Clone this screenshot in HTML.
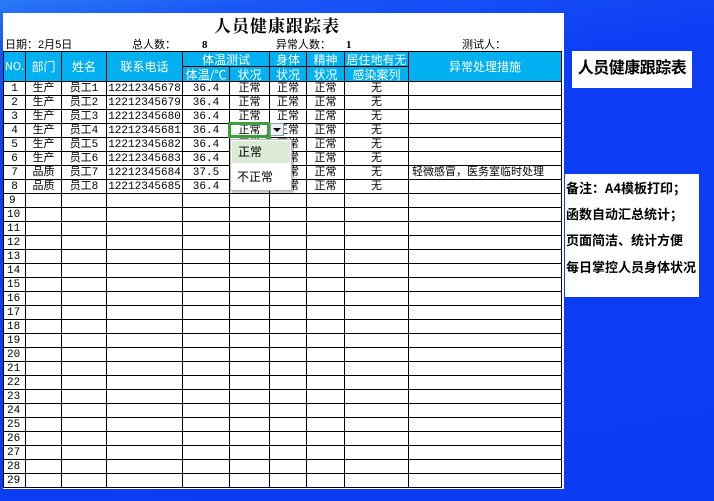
<!DOCTYPE html>
<html><head><meta charset="utf-8"><style>
*{margin:0;padding:0;box-sizing:border-box}
body{width:714px;height:501px;overflow:hidden;position:relative;font-family:"Liberation Sans","Noto Sans CJK SC",sans-serif;background:linear-gradient(170deg,#2a7af5 0%,#1a55f5 8%,#0d3df5 25%,#0c3cf2 100%)}
.sheet{position:absolute;left:3px;top:13px;width:561px;height:476px;background:#fff}
.abs{position:absolute;white-space:nowrap;color:#000;line-height:14px}
table{position:absolute;left:3px;top:51px;border-collapse:collapse;table-layout:fixed;font-size:11px;font-family:"Liberation Mono","Noto Sans CJK SC",monospace}
td{border:1px solid #000;height:14px;line-height:12px;text-align:center;overflow:hidden;white-space:nowrap;padding:0}
thead td{background:#00b0f0;color:#fff;font-family:"Noto Sans CJK SC",sans-serif;font-size:12px;line-height:13px;height:15px}
td.l{text-align:left;padding-left:3px}
.box{position:absolute;background:#fff;font-family:"Noto Sans CJK SC",sans-serif;font-weight:bold;color:#000}
</style></head><body>
<div class="sheet"></div>
<div class="abs" style="left:214px;top:15px;font-size:17px;line-height:20px;font-weight:bold;font-family:'Noto Serif CJK SC',serif;letter-spacing:1px">人员健康跟踪表</div>
<div class="abs" style="left:5px;top:38px;font-size:11px">日期：2月5日</div>
<div class="abs" style="left:132px;top:38px;font-size:11px">总人数：</div>
<div class="abs" style="left:202px;top:38px;font-size:11px;font-weight:bold;font-family:'Liberation Serif',serif">8</div>
<div class="abs" style="left:276px;top:38px;font-size:11px">异常人数：</div>
<div class="abs" style="left:346px;top:38px;font-size:11px;font-weight:bold;font-family:'Liberation Serif',serif">1</div>
<div class="abs" style="left:462px;top:38px;font-size:11px">测试人：</div>
<table>
<colgroup><col style="width:22px"><col style="width:36px"><col style="width:45px"><col style="width:76px"><col style="width:47px"><col style="width:40px"><col style="width:37px"><col style="width:38px"><col style="width:64px"><col style="width:153px"></colgroup>
<thead>
<tr><td rowspan="2" style="font-size:11px">NO.</td><td rowspan="2">部门</td><td rowspan="2">姓名</td><td rowspan="2">联系电话</td><td colspan="2">体温测试</td><td>身体</td><td>精神</td><td>居住地有无</td><td rowspan="2">异常处理措施</td></tr>
<tr><td>体温/℃</td><td>状况</td><td>状况</td><td>状况</td><td>感染案列</td></tr>
</thead>
<tbody>
<tr><td>1</td><td>生产</td><td>员工1</td><td>12212345678</td><td>36.4</td><td>正常</td><td>正常</td><td>正常</td><td>无</td><td></td></tr>
<tr><td>2</td><td>生产</td><td>员工2</td><td>12212345679</td><td>36.4</td><td>正常</td><td>正常</td><td>正常</td><td>无</td><td></td></tr>
<tr><td>3</td><td>生产</td><td>员工3</td><td>12212345680</td><td>36.4</td><td>正常</td><td>正常</td><td>正常</td><td>无</td><td></td></tr>
<tr><td>4</td><td>生产</td><td>员工4</td><td>12212345681</td><td>36.4</td><td>正常</td><td>正常</td><td>正常</td><td>无</td><td></td></tr>
<tr><td>5</td><td>生产</td><td>员工5</td><td>12212345682</td><td>36.4</td><td>正常</td><td>正常</td><td>正常</td><td>无</td><td></td></tr>
<tr><td>6</td><td>生产</td><td>员工6</td><td>12212345683</td><td>36.4</td><td>正常</td><td>正常</td><td>正常</td><td>无</td><td></td></tr>
<tr><td>7</td><td>品质</td><td>员工7</td><td>12212345684</td><td>37.5</td><td>正常</td><td>正常</td><td>正常</td><td>无</td><td style="text-align:left;padding-left:3px">轻微感冒，医务室临时处理</td></tr>
<tr><td>8</td><td>品质</td><td>员工8</td><td>12212345685</td><td>36.4</td><td>正常</td><td>正常</td><td>正常</td><td>无</td><td></td></tr>
<tr><td class="l" style="padding-left:5px">9</td><td></td><td></td><td></td><td></td><td></td><td></td><td></td><td></td><td></td></tr>
<tr><td class="l">10</td><td></td><td></td><td></td><td></td><td></td><td></td><td></td><td></td><td></td></tr>
<tr><td class="l">11</td><td></td><td></td><td></td><td></td><td></td><td></td><td></td><td></td><td></td></tr>
<tr><td class="l">12</td><td></td><td></td><td></td><td></td><td></td><td></td><td></td><td></td><td></td></tr>
<tr><td class="l">13</td><td></td><td></td><td></td><td></td><td></td><td></td><td></td><td></td><td></td></tr>
<tr><td class="l">14</td><td></td><td></td><td></td><td></td><td></td><td></td><td></td><td></td><td></td></tr>
<tr><td class="l">15</td><td></td><td></td><td></td><td></td><td></td><td></td><td></td><td></td><td></td></tr>
<tr><td class="l">16</td><td></td><td></td><td></td><td></td><td></td><td></td><td></td><td></td><td></td></tr>
<tr><td class="l">17</td><td></td><td></td><td></td><td></td><td></td><td></td><td></td><td></td><td></td></tr>
<tr><td class="l">18</td><td></td><td></td><td></td><td></td><td></td><td></td><td></td><td></td><td></td></tr>
<tr><td class="l">19</td><td></td><td></td><td></td><td></td><td></td><td></td><td></td><td></td><td></td></tr>
<tr><td class="l">20</td><td></td><td></td><td></td><td></td><td></td><td></td><td></td><td></td><td></td></tr>
<tr><td class="l">21</td><td></td><td></td><td></td><td></td><td></td><td></td><td></td><td></td><td></td></tr>
<tr><td class="l">22</td><td></td><td></td><td></td><td></td><td></td><td></td><td></td><td></td><td></td></tr>
<tr><td class="l">23</td><td></td><td></td><td></td><td></td><td></td><td></td><td></td><td></td><td></td></tr>
<tr><td class="l">24</td><td></td><td></td><td></td><td></td><td></td><td></td><td></td><td></td><td></td></tr>
<tr><td class="l">25</td><td></td><td></td><td></td><td></td><td></td><td></td><td></td><td></td><td></td></tr>
<tr><td class="l">26</td><td></td><td></td><td></td><td></td><td></td><td></td><td></td><td></td><td></td></tr>
<tr><td class="l">27</td><td></td><td></td><td></td><td></td><td></td><td></td><td></td><td></td><td></td></tr>
<tr><td class="l">28</td><td></td><td></td><td></td><td></td><td></td><td></td><td></td><td></td><td></td></tr>
<tr><td class="l">29</td><td></td><td></td><td></td><td></td><td></td><td></td><td></td><td></td><td></td></tr>
</tbody></table>
<div style="position:absolute;left:228px;top:122px;width:42px;height:16px;border:3px solid #3ca03c"></div>
<div style="position:absolute;left:266px;top:134px;width:5px;height:5px;background:#3ca03c"></div>
<div style="position:absolute;left:270px;top:123px;width:14px;height:13px;background:#f0f0f0;border:1px solid #8aa0c0"></div>
<div style="position:absolute;left:273px;top:128px;width:0;height:0;border-left:4px solid transparent;border-right:4px solid transparent;border-top:4px solid #000"></div>
<div style="position:absolute;left:230px;top:139px;width:62px;height:52px;background:#fff;border:1px solid #b8b8b8;box-shadow:2px 2px 2px rgba(0,0,0,.25)">
<div style="margin:1px;height:22px;background:#dbebd5;font-size:12px;line-height:22px;padding-left:6px;font-family:'Noto Sans CJK SC',sans-serif">正常</div>
<div style="height:26px;font-size:12px;line-height:26px;padding-left:6px;font-family:'Noto Sans CJK SC',sans-serif">不正常</div>
</div>
<div class="box" style="left:572px;top:51px;width:120px;height:37px;font-size:16px;line-height:30px;text-align:center;white-space:nowrap;letter-spacing:-0.5px">人员健康跟踪表</div>
<div class="box" style="left:565px;top:174px;width:134px;height:123px;font-size:13px;white-space:nowrap">
<div style="position:absolute;left:1px;top:4px">备注：A4模板打印；</div>
<div style="position:absolute;left:1px;top:30px">函数自动汇总统计；</div>
<div style="position:absolute;left:1px;top:56px">页面简洁、统计方便</div>
<div style="position:absolute;left:1px;top:83px">每日掌控人员身体状况</div>
</div>
</body></html>
